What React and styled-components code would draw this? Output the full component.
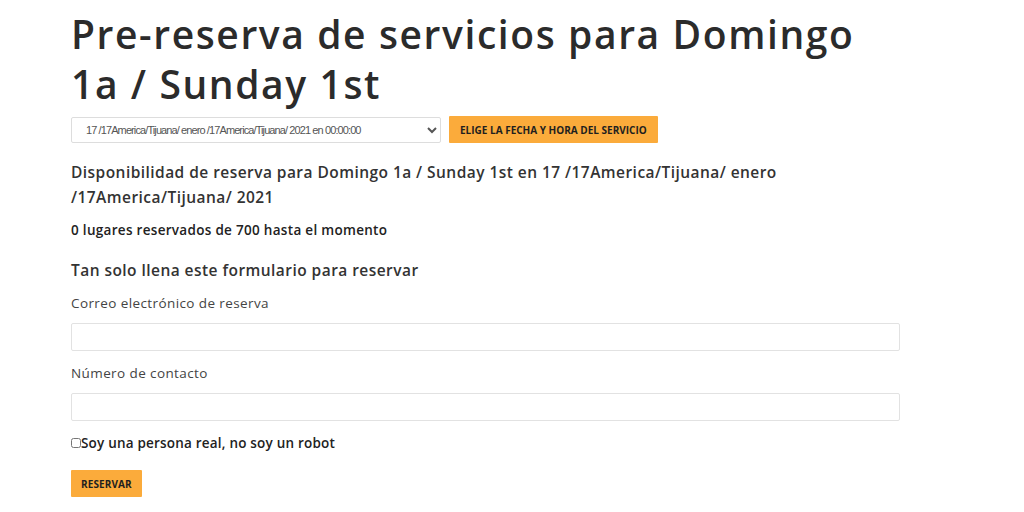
import React from 'react';
import styled, { createGlobalStyle } from 'styled-components';

const GlobalStyle = createGlobalStyle`
  body {
    margin: 0;
    background: #fff;
    font-family: "Open Sans", "Liberation Sans", sans-serif;
    color: #333;
  }
`;

const Page = styled.div`
  width: 828px;
  padding: 9px 0 0 71px;
`;

const Title = styled.h1`
  max-width: 800px;
  margin: 0;
  font-size: 39px;
  line-height: 50px;
  font-weight: 600;
  color: #2b2b2b;
  letter-spacing: 1.6px;
`;

const PickerRow = styled.div`
  display: flex;
  align-items: center;
  gap: 8px;
  margin-top: 7px;
`;

const Select = styled.select`
  width: 370px;
  height: 26px;
  border: 1px solid #ddd;
  border-radius: 2px;
  background: #fff;
  font-family: "Liberation Sans", Arial, sans-serif;
  font-size: 11px;
  letter-spacing: -0.9px;
  color: #555;
  padding: 0 4px 0 10px;
`;

const OrangeButton = styled.button`
  background: #fbab3b;
  border: none;
  border-radius: 1px;
  height: 27px;
  padding: 0 ${p => p.$px || 10}px;
  font-family: "Open Sans", sans-serif;
  font-weight: 700;
  font-size: 10px;
  letter-spacing: ${p => p.$ls || 0}px;
  color: #1f1f1f;
  text-transform: uppercase;
  cursor: pointer;
`;

const SubTitle = styled.h3`
  margin: ${p => p.$mt || 0}px 0 0;
  font-size: 15.5px;
  line-height: 25px;
  font-weight: 600;
  letter-spacing: 0.45px;
  color: #333;
`;

const Count = styled.p`
  margin: 11px 0 0;
  font-size: 13.5px;
  font-weight: 600;
  letter-spacing: 0.3px;
  color: #222;
`;

const Label = styled.label`
  display: block;
  margin-top: ${p => p.$mt || 0}px;
  font-size: 13.5px;
  letter-spacing: 0.4px;
  color: #444;
`;

const Input = styled.input`
  display: block;
  box-sizing: border-box;
  width: 829px;
  height: 28px;
  margin-top: 11px;
  border: 1px solid #e2e2e2;
  border-radius: 2px;
`;

const CheckRow = styled.label`
  display: flex;
  align-items: center;
  margin-top: 13px;
  font-size: 13.5px;
  font-weight: 600;
  letter-spacing: 0.2px;
  color: #222;

  input {
    margin: 0;
    width: 10px;
    height: 10px;
  }
`;

const Footer = styled.div`
  margin-top: 18px;
`;

export default function App() {
  return (
    <>
      <GlobalStyle />
      <Page>
        <Title>Pre-reserva de servicios para Domingo 1a / Sunday 1st</Title>
        <PickerRow>
          <Select defaultValue="a">
            <option value="a">17 /17America/Tijuana/ enero /17America/Tijuana/ 2021 en 00:00:00</option>
          </Select>
          <OrangeButton $px={11}>Elige la fecha y hora del servicio</OrangeButton>
        </PickerRow>
        <SubTitle $mt={17}>
          Disponibilidad de reserva para Domingo 1a / Sunday 1st en 17 /17America/Tijuana/ enero /17America/Tijuana/ 2021
        </SubTitle>
        <Count>0 lugares reservados de 700 hasta el momento</Count>
        <SubTitle $mt={19}>Tan solo llena este formulario para reservar</SubTitle>
        <Label $mt={11}>Correo electrónico de reserva</Label>
        <Input type="email" />
        <Label $mt={13}>Número de contacto</Label>
        <Input type="tel" />
        <CheckRow>
          <input type="checkbox" />
          Soy una persona real, no soy un robot
        </CheckRow>
        <Footer>
          <OrangeButton $px={10} $ls={0.1}>Reservar</OrangeButton>
        </Footer>
      </Page>
    </>
  );
}
